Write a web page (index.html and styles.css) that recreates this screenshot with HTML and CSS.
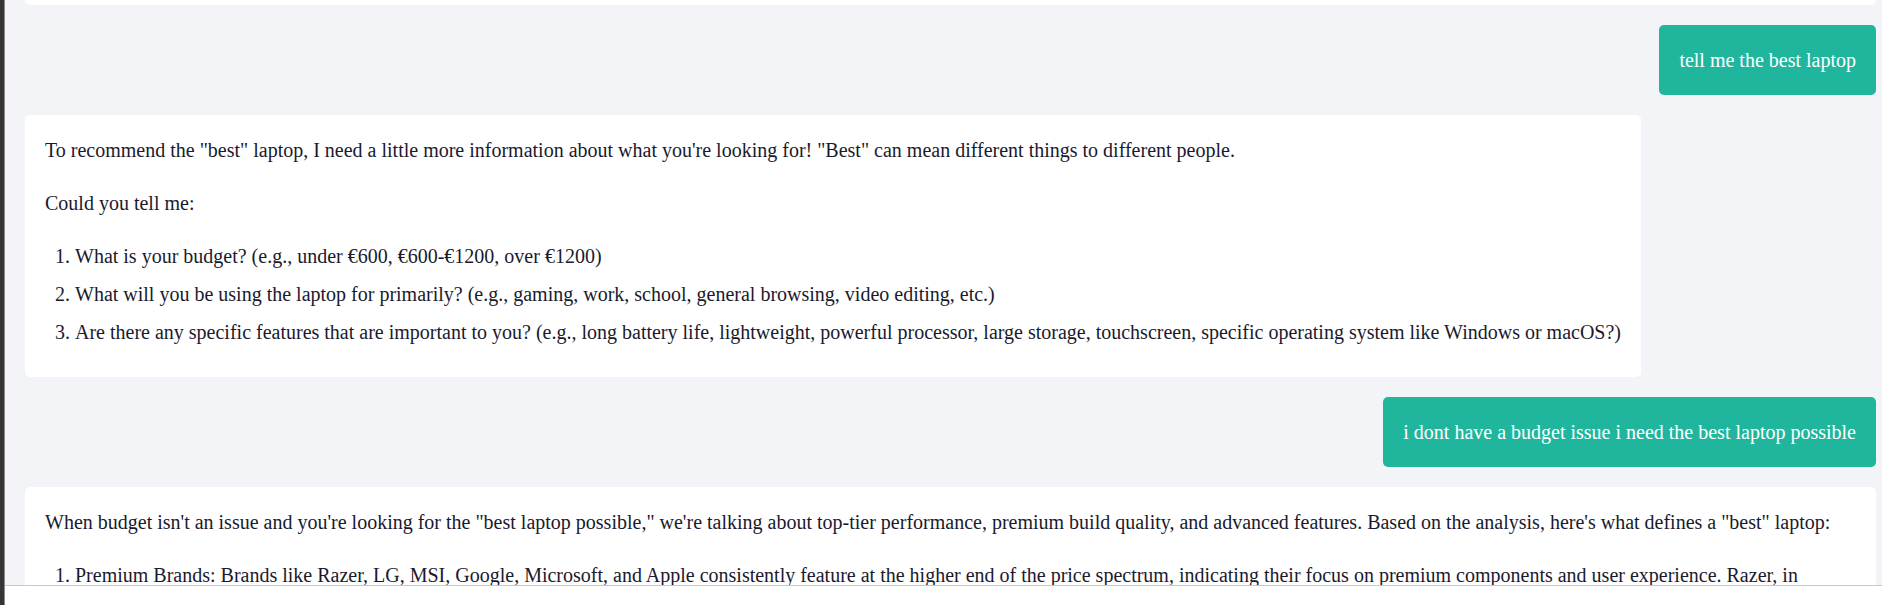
FILE: index.html
```html
<!DOCTYPE html>
<html lang="en">
<head>
<meta charset="utf-8">
<title>Chat</title>
<link rel="stylesheet" href="styles.css">
</head>
<body>
<div class="strip"></div>
<div class="main">
  <div class="chat">
    <div class="msg bot tail"></div>
    <div class="msg user"><p>tell me the best laptop</p></div>
    <div class="msg bot">
      <p>To recommend the "best" laptop, I need a little more information about what you're looking for! "Best" can mean different things to different people.</p>
      <p>Could you tell me:</p>
      <ol>
        <li>What is your budget? (e.g., under €600, €600-€1200, over €1200)</li>
        <li>What will you be using the laptop for primarily? (e.g., gaming, work, school, general browsing, video editing, etc.)</li>
        <li>Are there any specific features that are important to you? (e.g., long battery life, lightweight, powerful processor, large storage, touchscreen, specific operating system like Windows or macOS?)</li>
      </ol>
    </div>
    <div class="msg user"><p>i dont have a budget issue i need the best laptop possible</p></div>
    <div class="msg bot">
      <p>When budget isn't an issue and you're looking for the "best laptop possible," we're talking about top-tier performance, premium build quality, and advanced features. Based on the analysis, here's what defines a "best" laptop:</p>
      <ol>
        <li>Premium Brands: Brands like Razer, LG, MSI, Google, Microsoft, and Apple consistently feature at the higher end of the price spectrum, indicating their focus on premium components and user experience. Razer, in particular, stands out for high-end gaming and creator machines.</li>
      </ol>
    </div>
  </div>
  <div class="footer"></div>
</div>
</body>
</html>
```

FILE: styles.css
```css
html, body {
  margin: 0;
  padding: 0;
  height: 100%;
}
body {
  display: flex;
  font-family: "Liberation Serif", "Times New Roman", serif;
  font-size: 20px;
  color: #1a1a2e;
  background: #f3f4f7;
  overflow: hidden;
}
.strip {
  width: 4px;
  flex: none;
  background: #353535;
  border-right: 1px solid #8a8a8a;
}
.main {
  flex: 1;
  display: flex;
  flex-direction: column;
  height: 605px;
  min-width: 0;
}
.chat {
  flex: 1;
  min-height: 0;
  overflow: hidden;
  display: flex;
  flex-direction: column;
  gap: 20px;
  padding: 0 6px 0 20px;
}
.msg {
  flex: none;
  border-radius: 5px;
  padding: 20px;
  line-height: 30px;
  max-width: 100%;
  box-sizing: border-box;
}
.msg p {
  margin: 0 0 23px;
}
.msg p:last-child {
  margin-bottom: 0;
}
.bot {
  align-self: flex-start;
  background: #ffffff;
  padding-bottom: 22px;
}
.bot.tail {
  align-self: stretch;
  height: 5px;
  padding: 0;
  border-radius: 0 0 5px 5px;
}
.user {
  align-self: flex-end;
  background: #20b69e;
  color: #ffffff;
}
.msg ol {
  margin: 0;
  padding-left: 30px;
}
.msg li {
  margin-bottom: 8px;
}
.footer {
  flex: none;
  height: 19px;
  background: #ffffff;
  border-top: 1px solid #c8c8cc;
}
```
